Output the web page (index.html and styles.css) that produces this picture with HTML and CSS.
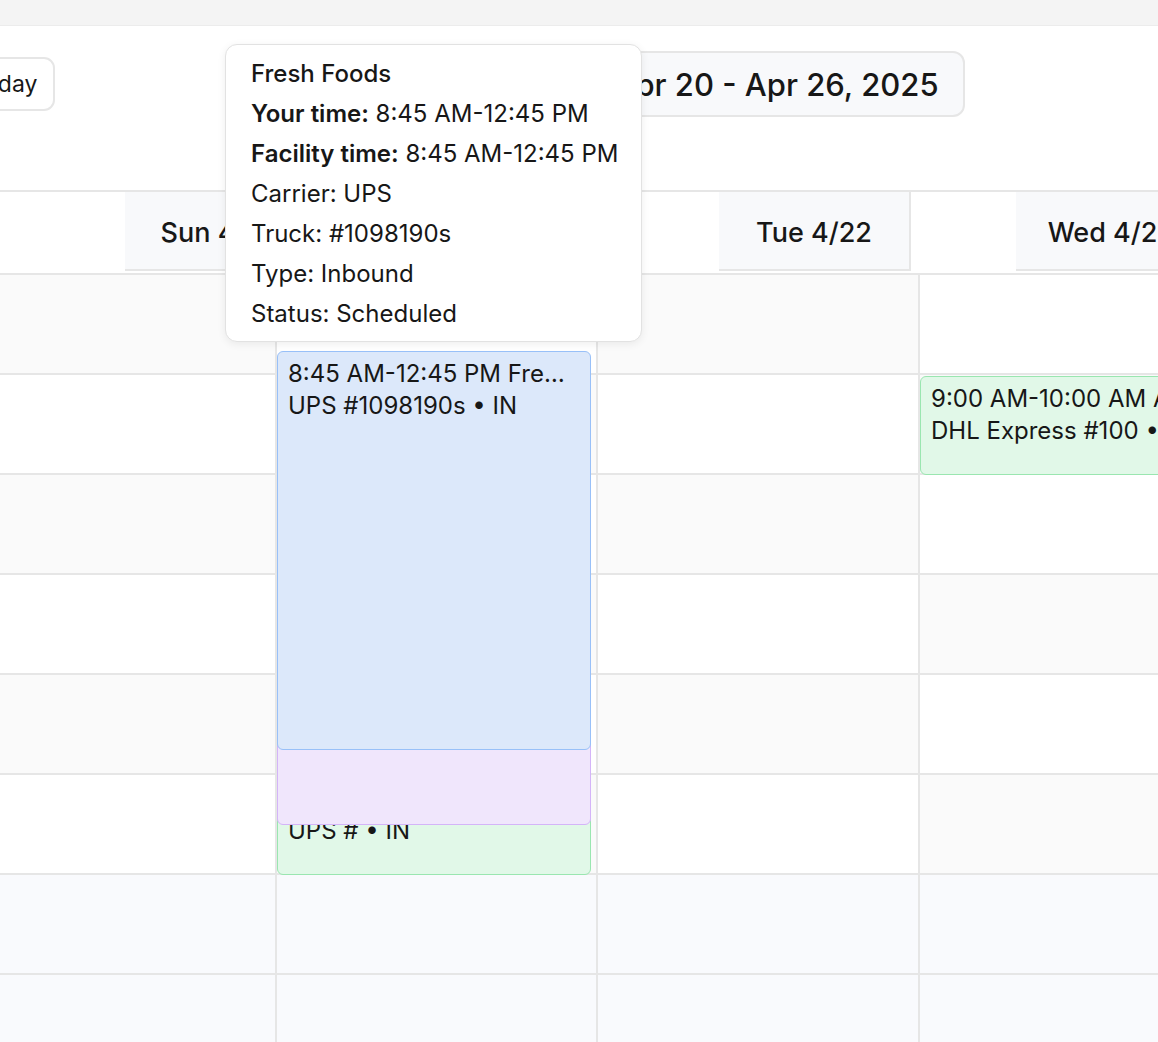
FILE: index.html
```html
<!DOCTYPE html>
<html lang="en">
<head>
<meta charset="utf-8">
<title>Dock schedule</title>
<link rel="stylesheet" href="styles.css">
</head>
<body>
<div class="topbar"></div>
<main class="board">
  <div class="toolbar">
    <button class="btn btn-today">Today</button>
    <button class="btn btn-range">Apr 20 - Apr 26, 2025</button>
  </div>

  <div class="week-head">
    <div class="head-gutter"></div>
    <div class="head-cell"><span class="head-label">Sun 4/20</span></div>
    <div class="head-cell"><span class="head-label">Mon 4/21</span></div>
    <div class="head-cell"><span class="head-label">Tue 4/22</span></div>
    <div class="head-cell"><span class="head-label">Wed 4/23</span></div>
    <div class="head-cell"><span class="head-label">Thu 4/24</span></div>
  </div>

  <div class="week-body">
    <section class="day-col">
      <div class="slot"></div><div class="slot"></div><div class="slot"></div><div class="slot"></div><div class="slot"></div><div class="slot"></div><div class="slot"></div><div class="slot"></div><div class="slot"></div>
    </section>
    <section class="day-col">
      <div class="slot"></div><div class="slot"></div><div class="slot"></div><div class="slot"></div><div class="slot"></div><div class="slot"></div><div class="slot"></div><div class="slot"></div><div class="slot"></div>
      <article class="event event-green" style="top:503px;height:99px">
        <div class="event-title">1:00 PM-2:00 PM Fresh Foods</div>
        <div class="event-sub">UPS # • IN</div>
      </article>
      <article class="event event-purple" style="top:403px;height:149px">
        <div class="event-title">12:00 PM-1:30 PM Fresh Foods</div>
        <div class="event-sub">FedEx #2231 • OUT</div>
      </article>
      <article class="event event-blue" style="top:78px;height:399px">
        <div class="event-title">8:45 AM-12:45 PM Fresh Foods</div>
        <div class="event-sub">UPS #1098190s • IN</div>
      </article>
    </section>
    <section class="day-col">
      <div class="slot"></div><div class="slot"></div><div class="slot"></div><div class="slot"></div><div class="slot"></div><div class="slot"></div><div class="slot"></div><div class="slot"></div><div class="slot"></div>
    </section>
    <section class="day-col">
      <div class="slot"></div><div class="slot"></div><div class="slot"></div><div class="slot"></div><div class="slot"></div><div class="slot"></div><div class="slot"></div><div class="slot"></div><div class="slot"></div>
      <article class="event event-green" style="top:103px;height:99px">
        <div class="event-title">9:00 AM-10:00 AM Acme Supply</div>
        <div class="event-sub">DHL Express #100 • OUT</div>
      </article>
    </section>
    <section class="day-col">
      <div class="slot"></div><div class="slot"></div><div class="slot"></div><div class="slot"></div><div class="slot"></div><div class="slot"></div><div class="slot"></div><div class="slot"></div><div class="slot"></div>
    </section>
  </div>
</main>

<div class="tooltip" role="tooltip">
  <div class="tip-line tip-title">Fresh Foods</div>
  <div class="tip-line"><strong>Your time:</strong> 8:45 AM-12:45 PM</div>
  <div class="tip-line"><strong>Facility time:</strong> 8:45 AM-12:45 PM</div>
  <div class="tip-line">Carrier: UPS</div>
  <div class="tip-line">Truck: #1098190s</div>
  <div class="tip-line">Type: Inbound</div>
  <div class="tip-line">Status: Scheduled</div>
</div>
</body>
</html>
```

FILE: styles.css
```css
* { box-sizing: border-box; }

html, body {
  margin: 0;
  padding: 0;
  overflow: hidden;
  background: #ffffff;
}

body {
  position: relative;
  width: 1158px;
  height: 1042px;
  font-family: Inter, "Noto Sans", "Liberation Sans", sans-serif;
  color: #171717;
}

.topbar {
  height: 26px;
  background: #f4f4f4;
  border-bottom: 1px solid #ececec;
}

/* horizontally scrolled week board */
.board {
  margin-left: -46px;
  width: max-content;
}

.toolbar {
  display: flex;
  align-items: center;
  padding-top: 25px;
  margin-bottom: 73px;
}

.btn {
  font-family: inherit;
  color: #171717;
  background: #ffffff;
  border: 2px solid #e6e6e6;
  border-radius: 11px;
  cursor: pointer;
}

.btn-today {
  height: 54px;
  padding: 0 16px 0 15px;
  font-size: 23px;
}

.btn-range {
  height: 66px;
  padding: 0 24px 0 25px;
  font-size: 31px;
  font-weight: 500;
  background: #f8f9fb;
  border-radius: 12px;
  margin-left: 531px;
}

/* header */
.week-head {
  display: flex;
  border-top: 2px solid #e6e6e6;
  margin-bottom: 2px;
}

.head-gutter { width: 66px; flex: none; }

.head-cell {
  flex: none;
  width: 297px;
  padding-left: 105px;
  display: flex;
}

.head-label {
  width: 192px;
  height: 79px;
  padding-top: 3px;
  display: flex;
  align-items: center;
  justify-content: center;
  background: #f8f9fb;
  border-right: 2px solid #e6e6e6;
  border-bottom: 2px solid #e6e6e6;
  font-size: 27px;
  font-weight: 500;
  color: #171717;
}

/* body grid */
.week-body {
  display: grid;
  grid-template-columns: 321px 321px 322px 322px 322px;
}

.day-col {
  position: relative;
  border-left: 2px solid #e6e6e6;
}

.slot {
  height: 100px;
  border-top: 2px solid #e6e6e6;
  background: #ffffff;
}

/* checkered hour shading */
.day-col:nth-child(odd) .slot:nth-of-type(odd),
.day-col:nth-child(even) .slot:nth-of-type(even) {
  background: #fafafa;
}

/* after-hours rows */
.week-body .day-col .slot.slot:nth-of-type(n+7) {
  background: #f9fafd;
}

/* events */
.event {
  position: absolute;
  left: 0;
  right: 5px;
  border: 1px solid;
  border-radius: 6px;
  padding: 6px 18px 5px 10px;
  font-size: 24px;
  line-height: 32px;
  color: #171717;
  overflow: hidden;
}

.event-title,
.event-sub {
  white-space: nowrap;
  overflow: hidden;
  text-overflow: ellipsis;
}

.event-blue { background: #dce8fa; border-color: #98c0f8; }
.event-purple { background: #f0e6fc; border-color: #d4b4f8; }
.event-green { background: #e1f8e8; border-color: #9ae6b0; }

/* tooltip */
.tooltip {
  position: absolute;
  left: 225px;
  top: 44px;
  width: 417px;
  height: 298px;
  padding: 9px 20px 6px 25px;
  background: #ffffff;
  border: 1px solid #e2e2e2;
  border-radius: 12px;
  box-shadow: 0 2px 8px rgba(0, 0, 0, 0.07);
  z-index: 10;
}

.tip-line {
  font-size: 24px;
  line-height: 40px;
  white-space: nowrap;
  color: #171717;
}

.tip-title { font-weight: 500; }

.tip-line strong { font-weight: 600; }
```
